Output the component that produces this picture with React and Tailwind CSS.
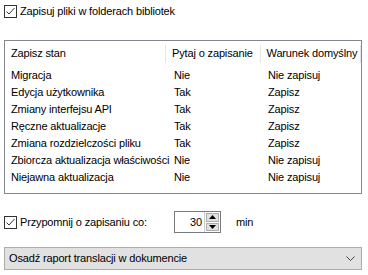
import React from "react";

const rows = [
  ["Migracja", "Nie", "Nie zapisuj"],
  ["Edycja użytkownika", "Tak", "Zapisz"],
  ["Zmiany interfejsu API", "Tak", "Zapisz"],
  ["Ręczne aktualizacje", "Tak", "Zapisz"],
  ["Zmiana rozdzielczości pliku", "Tak", "Zapisz"],
  ["Zbiorcza aktualizacja właściwości", "Nie", "Nie zapisuj"],
  ["Niejawna aktualizacja", "Nie", "Nie zapisuj"],
];

const Check = () => (
  <div className="w-[13px] h-[13px] border border-[#333] bg-white flex items-center justify-center shrink-0">
    <svg width="11" height="11" viewBox="0 0 11 11">
      <path d="M1.5 5.5 L4 8 L9.5 2" fill="none" stroke="#333" strokeWidth="1" />
    </svg>
  </div>
);

export default function App() {
  return (
    <div className="w-[368px] h-[275px] bg-white text-[11px] leading-[13px] tracking-[-0.15px] text-black font-['Liberation_Sans',sans-serif] px-[4px] pt-[5px] whitespace-nowrap">
      <div className="flex items-center gap-[3px] h-[13px]">
        <Check />
        <span>Zapisuj pliki w folderach bibliotek</span>
      </div>

      <div className="mt-[22px] h-[154px] border border-[#828790] mr-[2px]">
        <div className="flex h-[25px] items-center">
          <div className="w-[162px] pl-[6px] border-r border-[#e5e5e5] h-[18px] flex items-center">Zapisz stan</div>
          <div className="w-[95px] pl-[6px] border-r border-[#e5e5e5] h-[18px] flex items-center">Pytaj o zapisanie</div>
          <div className="w-[101px] pl-[6px] border-r border-[#e5e5e5] h-[18px] flex items-center">Warunek domyślny</div>
        </div>
        <div className="pt-[1px]">
          {rows.map((r) => (
            <div key={r[0]} className="flex h-[17px] items-center">
              <div className="w-[162px] pl-[6px]">{r[0]}</div>
              <div className="w-[95px] pl-[7px]">{r[1]}</div>
              <div className="flex-1 pl-[6px]">{r[2]}</div>
            </div>
          ))}
        </div>
      </div>

      <div className="flex items-center mt-[17px] h-[22px]">
        <div className="flex items-center gap-[3px] w-[170px]">
          <Check />
          <span>Przypomnij o zapisaniu co:</span>
        </div>
        <div className="flex h-[22px] w-[47px] border border-[#7a7a7a]">
          <div className="flex-1 flex items-center justify-end pr-[2px] bg-white">30</div>
          <div className="w-[16px] flex flex-col gap-[1px] p-[1px] border-l border-[#ccc] bg-white">
            <div className="flex-1 bg-[#e1e1e1] border border-[#adadad] flex items-center justify-center">
              <svg width="7" height="4" viewBox="0 0 7 4"><path d="M0 4 L3.5 0 L7 4 Z" fill="#000" /></svg>
            </div>
            <div className="flex-1 bg-[#e1e1e1] border border-[#adadad] flex items-center justify-center">
              <svg width="7" height="4" viewBox="0 0 7 4"><path d="M0 0 L3.5 4 L7 0 Z" fill="#000" /></svg>
            </div>
          </div>
        </div>
        <span className="ml-[15px]">min</span>
      </div>

      <div className="mt-[14px] mr-[2px] h-[23px] bg-[#e1e1e1] border border-[#adadad] flex items-center justify-between pl-[4px] pr-[6px]">
        <span>Osadź raport translacji w dokumencie</span>
        <svg width="9" height="5" viewBox="0 0 9 5"><path d="M0.5 0.5 L4.5 4.5 L8.5 0.5" fill="none" stroke="#444" strokeWidth="1" /></svg>
      </div>
    </div>
  );
}
